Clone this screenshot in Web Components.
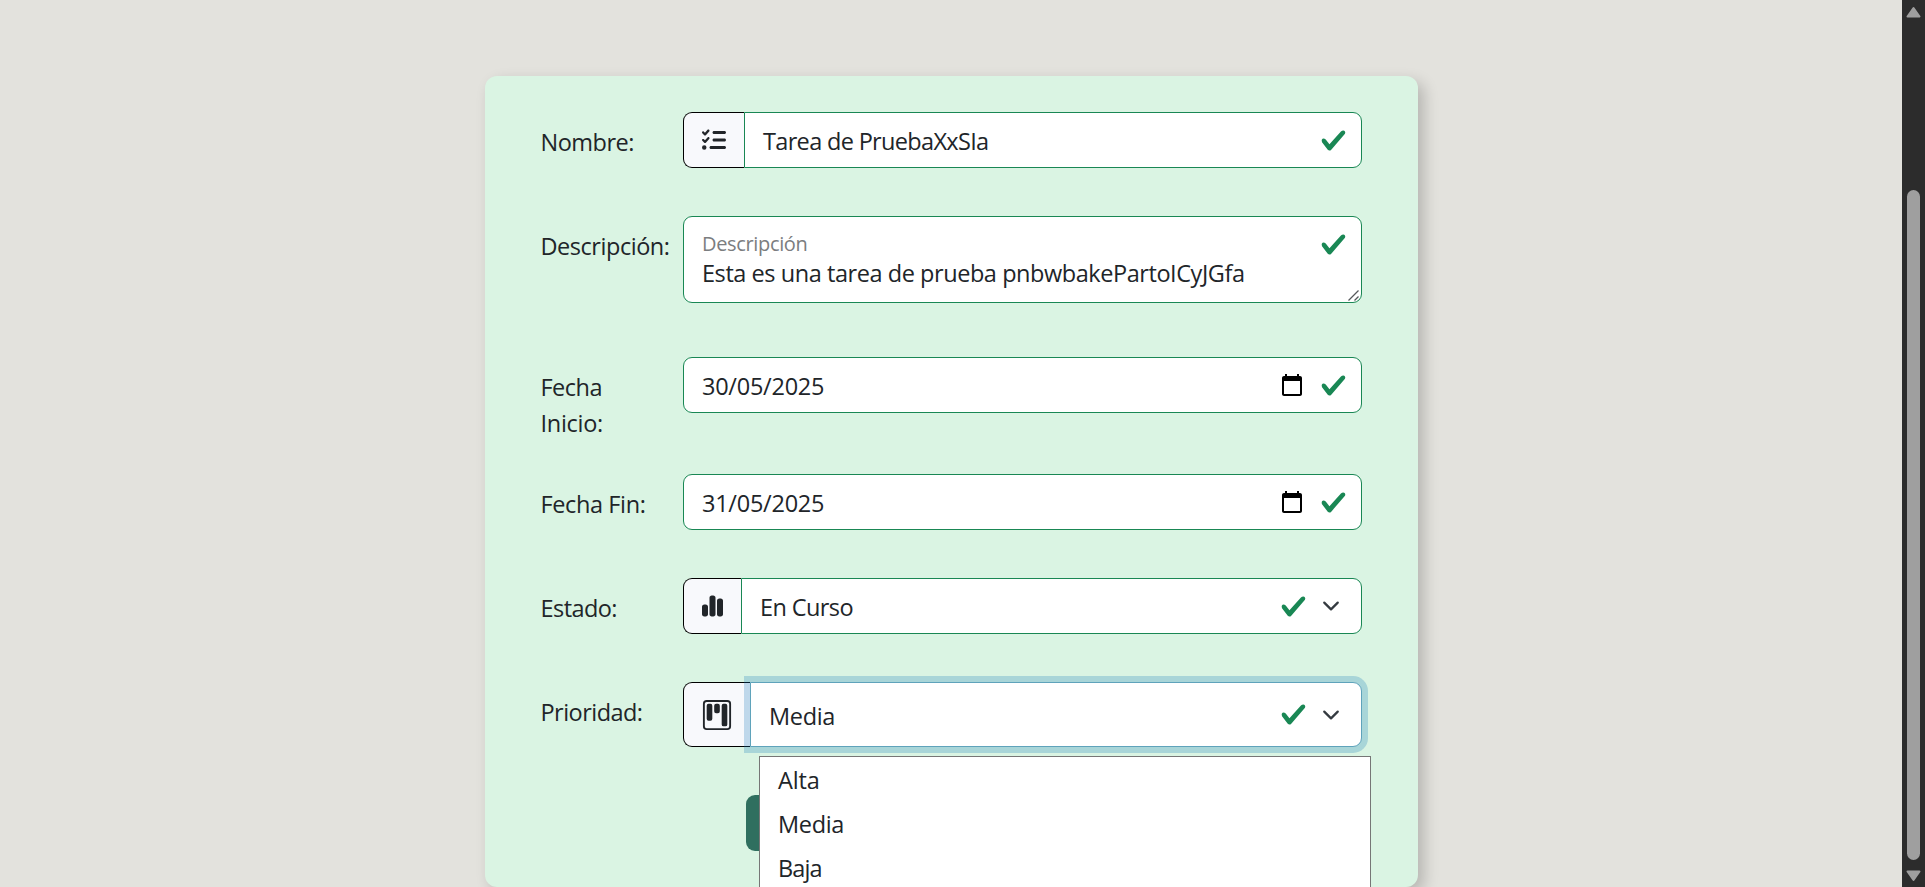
<!DOCTYPE html>
<html lang="es">
<head>
<meta charset="utf-8">
<title>Tarea</title>
<style>
html,body{margin:0;height:100%;overflow:hidden}
body{font:23.5px/36px "Open Sans","Noto Sans",sans-serif;color:#212529;background:#e3e2dd}
</style>
</head>
<body>
<task-page>
  <form-card>
    <form-row style="height:104px"><fit-text slot="label" w="93.5">Nombre:</fit-text>
      <field-box addon="list" check><fit-text w="225.5">Tarea de PruebaXxSIa</fit-text></field-box></form-row>
    <form-row style="height:141px"><fit-text slot="label" w="129">Descripción:</fit-text>
      <note-box><fit-text slot="caption" w="105.5">Descripción</fit-text><fit-text w="542.5">Esta es una tarea de prueba pnbwbakePartoICyJGfa</fit-text></note-box></form-row>
    <form-row style="height:117px"><span slot="label"><fit-text w="61.5">Fecha</fit-text><fit-text w="62.5">Inicio:</fit-text></span>
      <field-box calendar check><fit-text w="122.2">30/05/2025</fit-text></field-box></form-row>
    <form-row style="height:104px"><fit-text slot="label" w="105">Fecha Fin:</fit-text>
      <field-box calendar check><fit-text w="122.2">31/05/2025</fit-text></field-box></form-row>
    <form-row style="height:104px"><fit-text slot="label" w="76.5">Estado:</fit-text>
      <field-box addon="chart" check chevron><fit-text w="93">En Curso</fit-text></field-box></form-row>
    <form-row style="height:113px"><fit-text slot="label" w="102">Prioridad:</fit-text>
      <field-box addon="kanban" check chevron focused><fit-text w="66">Media</fit-text>
        <option-menu slot="menu"><fit-text w="41.7">Alta</fit-text><fit-text w="66">Media</fit-text><fit-text w="43.7">Baja</fit-text></option-menu>
      </field-box></form-row>
    <submit-button></submit-button>
  </form-card>
  <scroll-rail slot="rail"></scroll-rail>
</task-page>
<script>
const icons = {
  list: '<svg width="24" height="24" viewBox="0 0 512 512"><path fill="currentColor" d="M152.1 38.2c9.9 8.9 10.7 24 1.8 33.9l-72 80c-4.4 4.9-10.6 7.8-17.2 7.9s-12.9-2.4-17.6-7L7 113C-2.3 103.6-2.3 88.4 7 79s24.6-9.4 33.9 0l22.1 22.1 55.1-61.2c8.9-9.9 24-10.7 33.9-1.8zm0 160c9.9 8.9 10.7 24 1.8 33.9l-72 80c-4.4 4.9-10.6 7.8-17.2 7.9s-12.9-2.4-17.6-7L7 273c-9.4-9.4-9.4-24.6 0-33.9s24.6-9.4 33.9 0l22.1 22.1 55.1-61.2c8.9-9.9 24-10.7 33.9-1.8zM224 96c0-17.7 14.3-32 32-32H480c17.7 0 32 14.3 32 32s-14.3 32-32 32H256c-17.7 0-32-14.3-32-32zm0 160c0-17.7 14.3-32 32-32H480c17.7 0 32 14.3 32 32s-14.3 32-32 32H256c-17.7 0-32-14.3-32-32zM160 416c0-17.7 14.3-32 32-32H480c17.7 0 32 14.3 32 32s-14.3 32-32 32H192c-17.7 0-32-14.3-32-32zM48 368a48 48 0 1 1 0 96 48 48 0 1 1 0-96z"/></svg>',
  chart: '<svg width="21" height="24" viewBox="0 0 448 512"><path fill="currentColor" d="M160 80c0-26.5 21.5-48 48-48h32c26.5 0 48 21.5 48 48V432c0 26.5-21.5 48-48 48H208c-26.5 0-48-21.5-48-48V80zM0 272c0-26.5 21.5-48 48-48H80c26.5 0 48 21.5 48 48V432c0 26.5-21.5 48-48 48H48c-26.5 0-48-21.5-48-48V272zM368 96h32c26.5 0 48 21.5 48 48V432c0 26.5-21.5 48-48 48H368c-26.5 0-48-21.5-48-48V144c0-26.5 21.5-48 48-48z"/></svg>',
  kanban: '<svg width="30" height="30" viewBox="0 0 16 16"><path fill="currentColor" d="M13.5 1a1 1 0 0 1 1 1v12a1 1 0 0 1-1 1h-11a1 1 0 0 1-1-1V2a1 1 0 0 1 1-1h11zm-11-1a2 2 0 0 0-2 2v12a2 2 0 0 0 2 2h11a2 2 0 0 0 2-2V2a2 2 0 0 0-2-2h-11z"/><path fill="currentColor" d="M6.5 3a1 1 0 0 1 1-1h1a1 1 0 0 1 1 1v3a1 1 0 0 1-1 1h-1a1 1 0 0 1-1-1V3zm-4 0a1 1 0 0 1 1-1h1a1 1 0 0 1 1 1v7a1 1 0 0 1-1 1h-1a1 1 0 0 1-1-1V3zm8 0a1 1 0 0 1 1-1h1a1 1 0 0 1 1 1v10a1 1 0 0 1-1 1h-1a1 1 0 0 1-1-1V3z"/></svg>',
  check: '<svg class="check" width="27" height="27" viewBox="0 0 8 8"><path fill="#198754" d="M2.3 6.73L.6 4.53c-.4-1.04.46-1.4 1.1-.8l1.1 1.4 3.4-3.8c.6-.63 1.6-.27 1.2.7l-4 4.6c-.43.5-.8.4-1.1.1z"/></svg>',
  calendar: '<svg class="cal" width="24" height="24" viewBox="0 0 24 24"><path fill="#000" d="M20 3h-1V1h-2v2H7V1H5v2H4c-1.1 0-2 .9-2 2v16c0 1.1.9 2 2 2h16c1.1 0 2-.9 2-2V5c0-1.1-.9-2-2-2zm0 18H4V8h16v13z"/></svg>',
  chevron: '<svg class="chev" width="18" height="18" viewBox="0 0 16 16"><path fill="none" stroke="#343a40" stroke-linecap="round" stroke-linejoin="round" stroke-width="2" d="m2 5 6 6 6-6"/></svg>'
};
const define = (name, render, ready) => customElements.define(name, class extends HTMLElement {
  connectedCallback() {
    if (!this.shadowRoot) this.attachShadow({mode: 'open'}).innerHTML = render(this);
    if (ready) ready(this);
  }
});

define('task-page', () => `<style>
  :host{display:flex;height:100vh;overflow:hidden}
  main{flex:1;display:flex;align-items:flex-start;padding:76px 0 0 485px}
  </style><main><slot></slot></main><slot name="rail"></slot>`);

define('form-card', () => `<style>
  :host{display:flex;flex-direction:column;box-sizing:border-box;width:933px;height:811px;
    padding:36px 56px 0 54.5px;background:#daf4e3;border-radius:12px;box-shadow:6px 6px 15px rgba(0,0,0,.2)}
  </style><slot></slot>`);

define('form-row', () => `<style>
  :host{display:flex;align-items:flex-start;flex:none}
  .label{box-sizing:border-box;width:143.5px;padding:12px 0 0 1px;flex:none}
  .field{flex:1;min-width:0;display:flex}
  </style><div class="label"><slot name="label"></slot></div><div class="field"><slot></slot></div>`);

define('field-box', el => `<style>
  :host{position:relative;display:flex;flex:1;min-height:56px}
  .addon{display:flex;align-items:center;padding:0 18px;background:#f8f9fc;border:1px solid #000;
    border-right:0;border-radius:9px 0 0 9px}
  .addon svg{display:block;margin-top:-1px}
  .addon.kanban{padding:17px 18px 16px}
  .addon.kanban svg{margin:0}
  .box{flex:1;display:flex;align-items:center;box-sizing:border-box;padding:0 14.5px 0 18px;background:#fff;
    border:1px solid #198754;border-radius:9px}
  .addon + .box{border-radius:0 9px 9px 0}
  :host([focused]) .box{border-color:#5fa3bb;box-shadow:0 0 0 6px rgba(18,120,183,.25)}
  .text{flex:1;padding-top:2px}
  .cal{margin-right:15.5px;margin-top:-1px}
  :host([chevron]) .box{padding-right:21px}
  .chev{margin-left:15px;margin-top:-1px}
  :host([focused]) .chev{margin-top:0}
  svg{flex:none}
  </style>${el.hasAttribute('addon') ? `<div class="addon ${el.getAttribute('addon')}">${icons[el.getAttribute('addon')]}</div>` : ''}
  <div class="box"><div class="text"><slot></slot></div>${el.hasAttribute('calendar') ? icons.calendar : ''}${icons.check}${el.hasAttribute('chevron') ? icons.chevron : ''}</div>
  <slot name="menu"></slot>`);

define('note-box', () => `<style>
  :host{position:relative;display:flex;flex:1;justify-content:space-between;align-items:flex-start;box-sizing:border-box;
    height:87px;padding:0 14.5px 0 18px;background:#fff;border:1px solid #198754;border-radius:9px}
  .caption{font-size:20px;line-height:28px;color:#7b7d80;padding-top:13px}
  .body{line-height:30px}
  .check{margin-top:13.5px}
  .grip{position:absolute;right:1px;bottom:0}
  </style><div><div class="caption"><slot name="caption"></slot></div><div class="body"><slot></slot></div></div>${icons.check}
  <svg class="grip" width="13" height="13" viewBox="0 0 13 13"><path d="M1.5 11.5l10-10M7.5 11.5l4-4" fill="none" stroke="#55585b" stroke-width="1.3"/></svg>`);

define('option-menu', () => `<style>
  :host{position:absolute;left:76px;top:74px;width:612px;height:180px;box-sizing:border-box;background:#fff;
    border:1px solid #767676;padding:1px 0 0 18px;line-height:44px;z-index:2}
  </style><slot></slot>`);

define('submit-button', () => `<style>
  :host{display:block;width:320px;height:56px;margin:0 0 0 206.5px;background:#2f6f5f;border-radius:9px;flex:none}
  </style>`);

define('scroll-rail', () => `<style>
  :host{display:flex;flex-direction:column;align-items:center;box-sizing:border-box;width:23px;height:100%;
    padding:6px 0 5px;background:#2c2c2c}
  i{flex:1;width:13px;margin:172px 0 10px;border-radius:6.5px;background:#9f9f9f}
  svg{display:block}
  </style><svg width="15" height="12" viewBox="0 0 15 12"><path d="M7.5 2L13.5 10.5H1.5z" fill="#9f9f9f" stroke="#9f9f9f" stroke-width="2" stroke-linejoin="round"/></svg><i></i>
  <svg width="15" height="12" viewBox="0 0 15 12"><path d="M7.5 10L13.5 1.5H1.5z" fill="#9f9f9f" stroke="#9f9f9f" stroke-width="2" stroke-linejoin="round"/></svg>`);

/* Spreads the letters so the text takes the advance width given in "w".
   Registered last: it measures with the font its container passes down. */
define('fit-text', () => `<style>:host{display:block;white-space:pre}span{display:inline-block}</style><span><slot></slot></span>`, el => {
  const span = el.shadowRoot.querySelector('span');
  const extra = el.getAttribute('w') - span.getBoundingClientRect().width;
  span.style.letterSpacing = (extra / el.textContent.length) + 'px';
});
</script>
</body>
</html>
